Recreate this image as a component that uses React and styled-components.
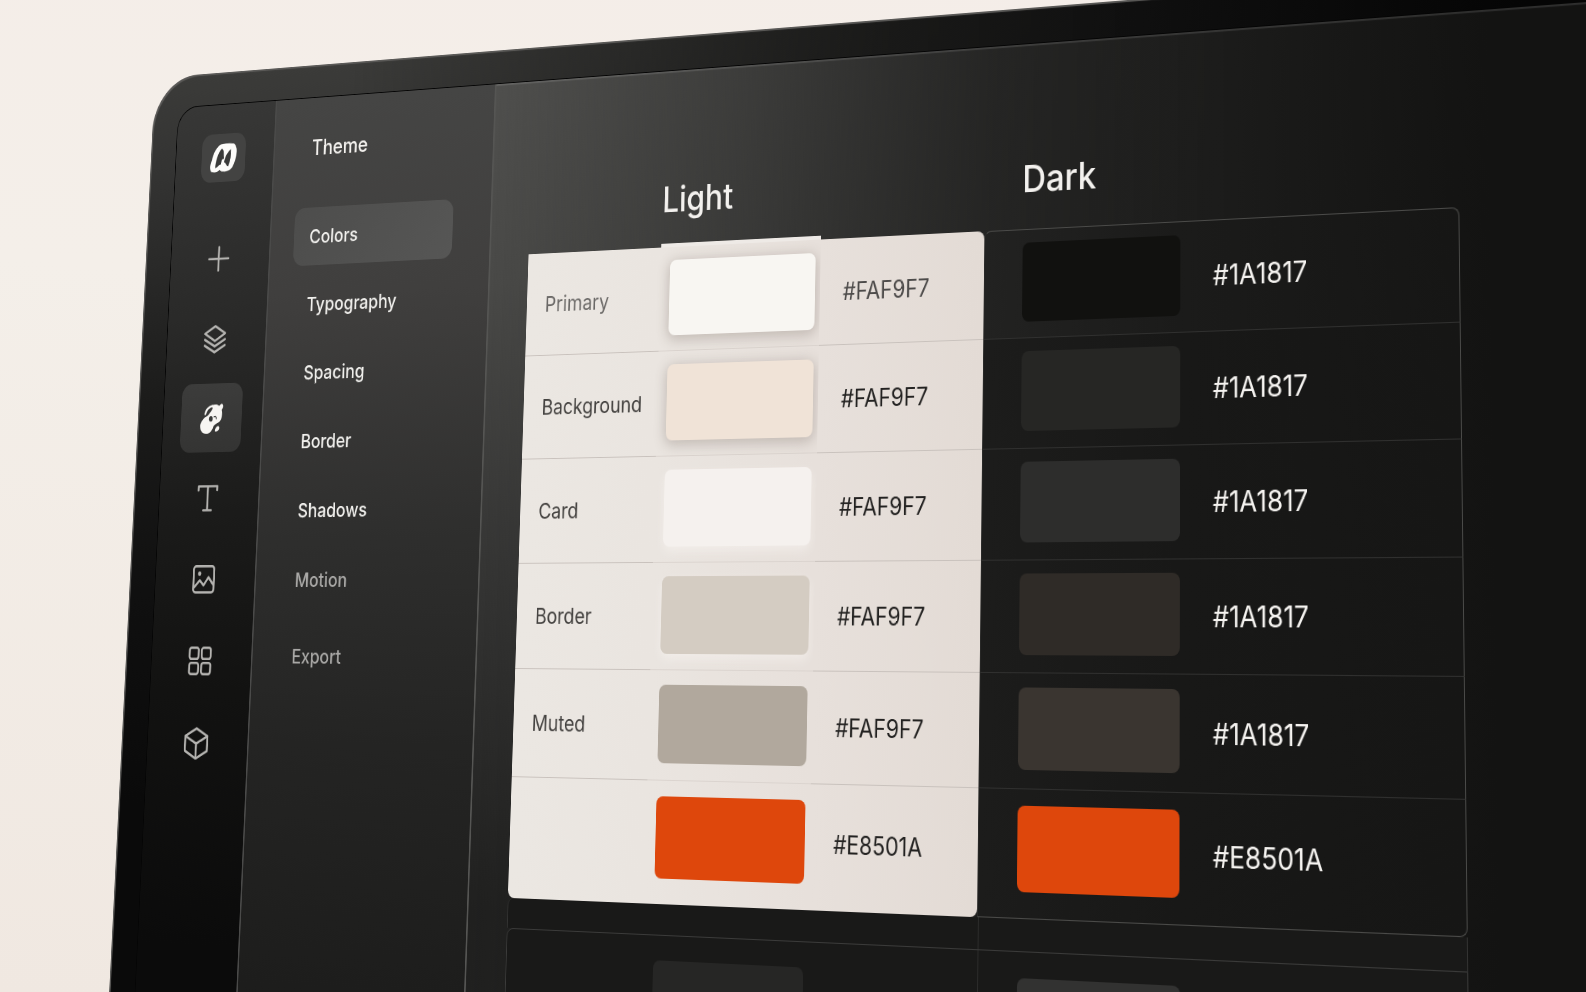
import React from 'react'
import styled, { createGlobalStyle, css } from 'styled-components'

const GlobalStyle = createGlobalStyle`
  *, *::before, *::after {
    box-sizing: border-box;
  }
  body {
    margin: 0;
    font-family: Inter, "Liberation Sans", sans-serif;
    color: #f3f1ee;
  }
`

const Backdrop = styled.div`
  height: 100vh;
  overflow: hidden;
  background: linear-gradient(185deg, #f4ede8 0%, #f4efe9 35%, #f0e8e1 100%);
`

/* the whole device is seen from its right-hand side, slightly from above */
const Device = styled.div`
  display: flex;
  width: 120vw;
  min-height: 120vh;
  padding: 38px;
  border-radius: 64px;
  background:
    linear-gradient(90deg, transparent 0%, transparent 15%, rgba(22, 22, 21, 0.9) 52%, #0f0f0f 68%, #050505 90%),
    linear-gradient(180deg, #3b3b39 0%, #333332 10%, #1b1b1a 32%, #101010 50%, #0a0a0a 70%);
  box-shadow: inset 2px 2px 1px #5c5b59;
  outline: 1px solid transparent;
  transform-origin: 0 0;
  transform: matrix3d(
    0.648, -0.061, 0, -0.0001,
    -0.04852, 0.8402, 0, -0.00004,
    0, 0, 1, 0,
    155, 78, 0, 1
  );
`

const Screen = styled.div`
  flex: 1;
  display: flex;
  overflow: hidden;
  border-radius: 28px;
  background: #161615;
  box-shadow: 0 0 0 1px #050505;
`

const Rail = styled.aside`
  flex: 0 0 143px;
  display: flex;
  flex-direction: column;
  align-items: center;
  gap: 50px;
  padding: 34px 4px 0 0;
  background: linear-gradient(180deg, #373736 0%, #2a2a29 22%, #1b1b1a 42%, #121211 60%, #0b0b0b 85%);
`

const Logo = styled.a`
  display: flex;
  align-items: center;
  justify-content: center;
  width: 64px;
  height: 56px;
  border-radius: 14px;
  background: #434342;
  color: #fdfcfa;
`

const Tools = styled.div`
  display: flex;
  flex-direction: column;
  gap: 13px;
`

const Tool = styled.button`
  display: flex;
  align-items: center;
  justify-content: center;
  width: 88px;
  height: 78px;
  padding: 0;
  border: 0;
  border-radius: 14px;
  background: ${p => (p.$active ? 'linear-gradient(180deg, #3c3c3b, #343433)' : 'none')};
  color: ${p => (p.$active ? '#f7f5f2' : '#b4b3b0')};
`

const Side = styled.nav`
  flex: 0 0 308px;
  padding: 42px 51px 0 33px;
  border-left: 2px solid #4a4a49;
  background: linear-gradient(180deg, #454544 0%, #403f3e 20%, #2e2e2d 45%, #242423 65%, #1b1b1a 95%);
`

const SideTitle = styled.h2`
  margin: 0 0 52px;
  padding-left: 20px;
  font-size: 24px;
  font-weight: 500;
  line-height: 32px;
`

const Links = styled.ul`
  display: flex;
  flex-direction: column;
  gap: 11px;
  margin: 0;
  padding: 0;
  list-style: none;

  li:last-child {
    margin-top: 7px;
  }
`

const Link = styled.a`
  display: block;
  padding: 0 22px;
  border-radius: 14px;
  font-size: 22px;
  font-weight: 500;
  line-height: 66px;
  text-decoration: none;
  color: ${p => (p.$quiet ? '#a9a8a6' : '#f0efec')};
  background: ${p => (p.$active ? 'linear-gradient(120deg, #4d4d4c, #565655)' : 'none')};
`

const Main = styled.main`
  flex: 1;
  padding: 118px 51px 0;
  border-left: 2px solid #555553;
  box-shadow: inset 0 2px 1px rgba(255, 255, 255, 0.12);
  background:
    linear-gradient(90deg, transparent 0%, rgba(32, 32, 31, 0.4) 24%, rgba(30, 30, 29, 0.85) 46%, #1b1b1a 66%, #131312 86%),
    linear-gradient(180deg, #4f4f4d 0%, #494947 20%, #333332 50%, #20201f 80%);
`

const Palette = styled.table`
  width: 100%;
  max-width: 1098px;
  table-layout: fixed;
  border-collapse: separate;
  border-spacing: 0;
  text-align: left;

  th, td {
    padding: 0;
  }
`

const Heading = styled.th`
  && {
    padding: 0 0 30px ${p => p.$indent || 0}px;
  }
  font-size: 38px;
  font-weight: 500;
  line-height: 44px;
`

const Row = styled.tr`
  height: ${p => (p.$last ? 126 : 112)}px;

  && > * {
    padding-bottom: ${p => (p.$last ? 6 : 0)}px;
  }

  &:nth-child(5) {
    height: 114px;
  }
`

const lightLine = css`
  border-bottom: ${p => (p.$last ? 0 : 1)}px solid #c9c2bd;
`

const frame = '#4b4b49'

const darkLine = css`
  border-bottom: 1px solid ${p => (p.$last ? frame : '#30302f')};
  border-top: ${p => (p.$first ? `1px solid ${frame}` : 0)};
`

const Label = styled.th`
  && {
    padding-left: 24px;
  }
  ${lightLine}
  border-radius: ${p => (p.$last ? '0 0 0 8px' : 0)};
  background: linear-gradient(90deg, #ebe7e2, #eae5e0);
  color: ${p => (p.$first ? '#6b6967' : '#454341')};
  font-size: 23px;
  font-weight: 400;
`

const LightSwatch = styled.td`
  && {
    padding: 0 0 ${p => (p.$last ? 10 : 2)}px 12px;
  }
  border-bottom: ${p => (p.$last ? 0 : 1)}px solid #dbd4cf;
  background: linear-gradient(90deg, #eae5e0, #e7e0db);
  box-shadow: ${p => (p.$first ? '0 -4px 0 #eeeae6' : 'none')};
`

const LightHex = styled.td`
  && {
    padding-left: 28px;
  }
  ${lightLine}
  border-radius: ${p => (p.$first ? '0 8px 0 0' : p.$last ? '0 0 8px 0' : 0)};
  background: linear-gradient(90deg, #e7e0db, #e3dbd5);
  color: ${p => (p.$first ? '#4d4b4a' : '#232221')};
  font-size: 25px;
`

const DarkSwatch = styled.td`
  && {
    padding: 0 0 ${p => (p.$last ? 10 : 4)}px 44px;
  }
  ${darkLine}
  border-left: 1px solid #2a2a29;
  border-radius: ${p => (p.$first ? '8px 0 0 0' : 0)};
  background: ${p => (p.$first ? 'linear-gradient(90deg, #222221, #1b1b1a)' : 'linear-gradient(90deg, #1c1c1b, #181817)')};
`

const DarkHex = styled.td`
  && {
    padding-left: 36px;
  }
  ${darkLine}
  border-right: 1px solid ${frame};
  border-radius: ${p => (p.$first ? '0 8px 0 0' : p.$last ? '0 0 8px 0' : 0)};
  background: linear-gradient(90deg, ${p => (p.$first ? '#1b1b1a' : '#181817')}, #161615);
  color: #f6f4f1;
  font-size: 28px;
`

const shadows = {
  deep: '0 3px 14px 2px rgba(90, 75, 65, 0.26)',
  soft: '0 5px 12px rgba(255, 252, 250, 0.4)',
}

const Swatch = styled.div`
  width: ${p => (p.$dark ? 180 : 183)}px;
  height: ${p => (p.$tall ? 84 : 81)}px;
  border-radius: 8px;
  background: ${p => p.$color};
  box-shadow: ${p => shadows[p.$shadow] || 'none'};
`

const Gutter = styled.div`
  display: grid;
  grid-template-columns: 572px 1fr;
  max-width: 1098px;
  height: 31px;
  border: solid #333332;
  border-width: 0 1px;
  border-radius: 8px 0 0 0;
  background: #191918;

  & > * + * {
    border-left: 1px solid #2e2e2d;
  }
`

const NextGroup = styled(Gutter)`
  height: 180px;
  border: 1px solid #3b3b3a;
`

const NextCell = styled.div`
  padding: 25px 0 0 ${p => p.$indent}px;
`

/* tool icons share a 32px box */
const Svg = styled.svg`
  display: block;
  width: ${p => p.$width || 36}px;
  height: 36px;
  fill: none;
  stroke: currentColor;
  stroke-width: 2.4;
  stroke-linejoin: round;
  stroke-linecap: round;
`

const icons = {
  Add: <path d="M16 4v24M3.500 16h25" />,
  Layers: (
    <>
      <path d="M16 4 29 11.500 16 19 3 11.500z" />
      <path d="M3 17.500l13 7 13-7M3 23.500l13 7 13-7" />
    </>
  ),
  Colors: (
    <g stroke="none" fill="currentColor">
      <path d="M5 18c2-3 5-3 7-5 2-2 4-4 5-6 1-1-1-2-3-2 3-3 9-3 11-1 1 1 2-2 4-2 2 1 2 4 0 6 1 5 1 9-2 12-3 2-6 2-8 5-1 4-4 7-9 7-5 0-8-4-8-8 0-2 1-4 3-6z" />
      <path d="M8 12c1-4 4-7 9-8" fill="none" stroke="currentColor" strokeWidth="2.2" />
      <path d="M22 27c1-2 4-4 5-1 0 3-3 4-5 4-1-1-1-2 0-3z" />
      <ellipse cx="15.500" cy="17" rx="2.300" ry="2.800" fill="#3a3a39" />
      <path d="M19.500 15c2-1 3 0 3 2" fill="none" stroke="#3a3a39" strokeWidth="1" />
    </g>
  ),
  Text: <path d="M4 8V4h24v4M16 4v24M11 28h10" />,
  Image: (
    <>
      <rect x="3" y="3" width="26" height="26" rx="3" />
      <path d="M4 24l7-7 5 5 6-8 6 7" />
      <circle cx="10.500" cy="10.500" r="1" fill="currentColor" />
    </>
  ),
  Components: (
    <>
      <rect x="2.500" y="3" width="11.500" height="11" rx="2.500" />
      <rect x="18" y="3" width="11.500" height="11" rx="2.500" />
      <rect x="2.500" y="18" width="11.500" height="11" rx="2.500" />
      <rect x="18" y="18" width="11.500" height="11" rx="2.500" />
    </>
  ),
  Models: (
    <>
      <path d="M16 1.500 30 9v14.500L16 31 2 23.500V9z" />
      <path d="M2 9 16 16.500 30 9M16 16.500V31" />
    </>
  ),
}

const links = ['Colors', 'Typography', 'Spacing', 'Border', 'Shadows', 'Motion', 'Export']

const tokens = [
  { name: 'Primary', light: '#f8f6f2', dark: '#11110f', shadow: 'deep' },
  { name: 'Background', light: '#f0e3d7', dark: '#262624', shadow: 'deep' },
  { name: 'Card', light: '#f5f1ee', dark: '#2d2d2c', shadow: 'soft' },
  { name: 'Border', light: '#d4ccc2', dark: '#2f2b27', shadow: 'soft' },
  { name: 'Muted', light: '#b1a89d', dark: '#3a3530' },
  { name: '', light: '#de470c', dark: '#de470c', lightHex: '#E8501A', darkHex: '#E8501A' },
]

const Mark = () => (
  <Svg viewBox="0 0 36 32" $width={38} aria-hidden="true">
    <g fill="currentColor" stroke="none">
      <path d="M14 1c5-1 13-1 18 0 3 2 4 5 4 9 0 6-2 12-5 17-3 4-8 5-15 4l-3-2c-2 3-7 3-11 2-3-3-2-8 0-13C4 10 8 3 14 1z" />
      <path d="M15 6c2 0 3 2 3 4l1 7-3 1-1 5c-3 0-4 3-8 4 0-6 3-17 8-21z" fill="#3a3a39" />
      <path d="M28 7c1 6 0 13-3 19-2-1-3-2-4-4l-2-1c1-5 4-11 9-14z" fill="#3a3a39" />
    </g>
  </Svg>
)

const TokenRow = ({ token, first, last }) => {
  const edge = { $first: first, $last: last }
  return (
    <Row $last={last}>
      <Label scope="row" {...edge}>{token.name}</Label>
      <LightSwatch {...edge}>
        <Swatch $tall={last} $color={token.light} $shadow={token.shadow} />
      </LightSwatch>
      <LightHex {...edge}>{token.lightHex || '#FAF9F7'}</LightHex>
      <DarkSwatch {...edge}>
        <Swatch $dark $tall={last} $color={token.dark} />
      </DarkSwatch>
      <DarkHex {...edge}>{token.darkHex || '#1A1817'}</DarkHex>
    </Row>
  )
}

export default () => (
  <Backdrop>
    <GlobalStyle />
    <Device>
      <Screen>
        <Rail>
          <Logo href="#home" aria-label="Home"><Mark /></Logo>
          <Tools>
            {Object.keys(icons).map(name => (
              <Tool key={name} type="button" aria-label={name} $active={name === 'Colors'}>
                <Svg viewBox="0 0 32 32" aria-hidden="true">{icons[name]}</Svg>
              </Tool>
            ))}
          </Tools>
        </Rail>
        <Side>
          <SideTitle>Theme</SideTitle>
          <Links>
            {links.map((name, i) => (
              <li key={name}>
                <Link href={`#${name.toLowerCase()}`} $active={i === 0} $quiet={i > 4}>{name}</Link>
              </li>
            ))}
          </Links>
        </Side>
        <Main>
          <Palette>
            <colgroup>
              <col width="174" />
              <col width="201" />
              <col width="197" />
              <col width="225" />
              <col />
            </colgroup>
            <thead>
              <tr>
                <td />
                <Heading scope="colgroup" colSpan="2">Light</Heading>
                <Heading scope="colgroup" colSpan="2" $indent={44}>Dark</Heading>
              </tr>
            </thead>
            <tbody>
              {tokens.map((token, i) => (
                <TokenRow key={i} token={token} first={i === 0} last={i === tokens.length - 1} />
              ))}
            </tbody>
          </Palette>
          <Gutter><span /><span /></Gutter>
          <NextGroup>
            <NextCell $indent={186}><Swatch $color="#262625" /></NextCell>
            <NextCell $indent={44}><Swatch $dark $color="#323231" /></NextCell>
          </NextGroup>
        </Main>
      </Screen>
    </Device>
  </Backdrop>
)
